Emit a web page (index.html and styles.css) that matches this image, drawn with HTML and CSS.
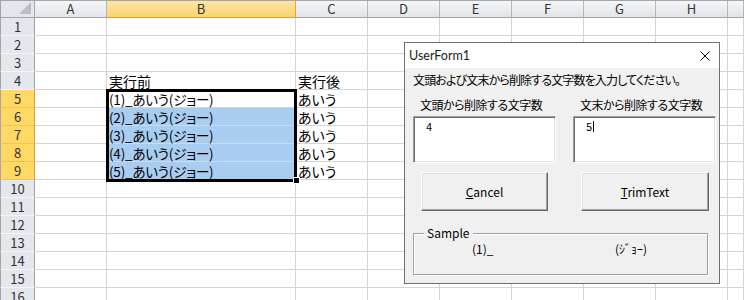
FILE: index.html
```html
<!DOCTYPE html>
<html lang="ja">
<head>
    <meta charset="UTF-8">
    <title>TrimText</title>
    <link rel="stylesheet" href="styles.css">
</head>
<body>
    <div class="sheet">
        <div class="row">
            <div class="corner"><svg width="12" height="12" viewBox="0 0 12 12"><polygon points="12,0 12,12 0,12" fill="#b9bec5"/></svg></div>
            <div class="col-head">A</div>
            <div class="col-head sel">B</div>
            <div class="col-head">C</div>
            <div class="col-head">D</div>
            <div class="col-head">E</div>
            <div class="col-head">F</div>
            <div class="col-head">G</div>
            <div class="col-head">H</div>
            <div class="col-head"></div>
        </div>
        <div class="row">
            <div class="row-head">1</div>
            <div class="cell"></div><div class="cell"></div><div class="cell"></div><div class="cell"></div><div class="cell"></div><div class="cell"></div><div class="cell"></div><div class="cell"></div><div class="cell"></div>
        </div>
        <div class="row">
            <div class="row-head">2</div>
            <div class="cell"></div><div class="cell"></div><div class="cell"></div><div class="cell"></div><div class="cell"></div><div class="cell"></div><div class="cell"></div><div class="cell"></div><div class="cell"></div>
        </div>
        <div class="row">
            <div class="row-head">3</div>
            <div class="cell"></div><div class="cell"></div><div class="cell"></div><div class="cell"></div><div class="cell"></div><div class="cell"></div><div class="cell"></div><div class="cell"></div><div class="cell"></div>
        </div>
        <div class="row">
            <div class="row-head">4</div>
            <div class="cell"></div><div class="cell">実行前</div><div class="cell">実行後</div><div class="cell"></div><div class="cell"></div><div class="cell"></div><div class="cell"></div><div class="cell"></div><div class="cell"></div>
        </div>
        <div class="row">
            <div class="row-head sel">5</div>
            <div class="cell"></div><div class="cell src">(1)_あいう(ジョー)</div><div class="cell">あいう</div><div class="cell"></div><div class="cell"></div><div class="cell"></div><div class="cell"></div><div class="cell"></div><div class="cell"></div>
        </div>
        <div class="row">
            <div class="row-head sel">6</div>
            <div class="cell"></div><div class="cell src hl">(2)_あいう(ジョー)</div><div class="cell">あいう</div><div class="cell"></div><div class="cell"></div><div class="cell"></div><div class="cell"></div><div class="cell"></div><div class="cell"></div>
        </div>
        <div class="row">
            <div class="row-head sel">7</div>
            <div class="cell"></div><div class="cell src hl">(3)_あいう(ジョー)</div><div class="cell">あいう</div><div class="cell"></div><div class="cell"></div><div class="cell"></div><div class="cell"></div><div class="cell"></div><div class="cell"></div>
        </div>
        <div class="row">
            <div class="row-head sel">8</div>
            <div class="cell"></div><div class="cell src hl">(4)_あいう(ジョー)</div><div class="cell">あいう</div><div class="cell"></div><div class="cell"></div><div class="cell"></div><div class="cell"></div><div class="cell"></div><div class="cell"></div>
        </div>
        <div class="row">
            <div class="row-head sel">9</div>
            <div class="cell"></div><div class="cell src hl">(5)_あいう(ジョー)</div><div class="cell">あいう</div><div class="cell"></div><div class="cell"></div><div class="cell"></div><div class="cell"></div><div class="cell"></div><div class="cell"></div>
        </div>
        <div class="row">
            <div class="row-head">10</div>
            <div class="cell"></div><div class="cell"></div><div class="cell"></div><div class="cell"></div><div class="cell"></div><div class="cell"></div><div class="cell"></div><div class="cell"></div><div class="cell"></div>
        </div>
        <div class="row">
            <div class="row-head">11</div>
            <div class="cell"></div><div class="cell"></div><div class="cell"></div><div class="cell"></div><div class="cell"></div><div class="cell"></div><div class="cell"></div><div class="cell"></div><div class="cell"></div>
        </div>
        <div class="row">
            <div class="row-head">12</div>
            <div class="cell"></div><div class="cell"></div><div class="cell"></div><div class="cell"></div><div class="cell"></div><div class="cell"></div><div class="cell"></div><div class="cell"></div><div class="cell"></div>
        </div>
        <div class="row">
            <div class="row-head">13</div>
            <div class="cell"></div><div class="cell"></div><div class="cell"></div><div class="cell"></div><div class="cell"></div><div class="cell"></div><div class="cell"></div><div class="cell"></div><div class="cell"></div>
        </div>
        <div class="row">
            <div class="row-head">14</div>
            <div class="cell"></div><div class="cell"></div><div class="cell"></div><div class="cell"></div><div class="cell"></div><div class="cell"></div><div class="cell"></div><div class="cell"></div><div class="cell"></div>
        </div>
        <div class="row">
            <div class="row-head">15</div>
            <div class="cell"></div><div class="cell"></div><div class="cell"></div><div class="cell"></div><div class="cell"></div><div class="cell"></div><div class="cell"></div><div class="cell"></div><div class="cell"></div>
        </div>
        <div class="row">
            <div class="row-head">16</div>
            <div class="cell"></div><div class="cell"></div><div class="cell"></div><div class="cell"></div><div class="cell"></div><div class="cell"></div><div class="cell"></div><div class="cell"></div><div class="cell"></div>
        </div>

        <!-- selected range B5:B9 -->
        <div class="selection"></div>
        <div class="fill-handle"></div>
    </div>

    <div class="dialog">
        <div class="titlebar">
            <span class="title">UserForm1</span>
            <svg class="close" width="10" height="10" viewBox="0 0 10 10">
                <path d="M0.5 0.5 L9.5 9.5 M9.5 0.5 L0.5 9.5" stroke="#000" stroke-width="1" fill="none"/>
            </svg>
        </div>
        <div class="form-body">
            <p class="prompt">文頭および文末から削除する文字数を入力してください。</p>
            <div class="fields">
                <div class="field">
                    <label>文頭から削除する文字数</label>
                    <div class="textbox">4</div>
                </div>
                <div class="field">
                    <label>文末から削除する文字数</label>
                    <div class="textbox">5<span class="caret"></span></div>
                </div>
            </div>
            <div class="buttons">
                <button class="btn cancel"><u>C</u>ancel</button>
                <button class="btn trim"><u>T</u>rimText</button>
            </div>
            <fieldset class="sample">
                <legend>Sample</legend>
                <div class="sample-cols">
                    <span>(1)_</span>
                    <span>(ｼﾞｮｰ)</span>
                </div>
            </fieldset>
        </div>
    </div>
</body>
</html>
```

FILE: styles.css
```css
* {
    box-sizing: border-box;
}

body {
    margin: 0;
    width: 744px;
    height: 300px;
    overflow: hidden;
    position: relative;
    background: #fff;
    font-family: "Noto Sans CJK JP", sans-serif;
}

/* spreadsheet */
.sheet {
    position: relative;
    display: grid;
    grid-template-columns: 35px 72px 189px repeat(6, 72px) 16px;
    grid-auto-rows: 18px;
}

.row {
    display: contents;
}

.corner {
    display: flex;
    align-items: flex-end;
    justify-content: flex-end;
    padding: 0 3px 3px 0;
    background: #e4e7eb;
    border: 1px solid #a3a7ad;
}

.col-head {
    background: linear-gradient(#f5f6f8, #e2e5e9);
    border-top: 1px solid #a3a7ad;
    border-right: 1px solid #b4b8be;
    border-bottom: 1px solid #9ea3aa;
    text-align: center;
    font-size: 13px;
    line-height: 16px;
    color: #333;
}

.col-head.sel {
    background: linear-gradient(#fbe7a6, #f8d470);
    border-right-color: #e4a13e;
    border-bottom-color: #e59a34;
}

.row-head {
    background: #e4e7eb;
    border-left: 1px solid #a3a7ad;
    border-right: 1px solid #9ea3aa;
    border-bottom: 1px solid #f4f5f7;
    text-align: center;
    font-size: 13px;
    line-height: 17px;
    color: #333;
}

.row-head.sel {
    background: #ffd964;
    border-right-color: #e29b35;
    border-bottom-color: #f1c25a;
}

.cell {
    border-right: 1px solid #d4d4d4;
    border-bottom: 1px solid #d4d4d4;
    padding: 1px 0 0 2px;
    font-size: 14px;
    line-height: 16px;
    white-space: nowrap;
    color: #000;
    font-feature-settings: "palt";
}

.cell.src {
    font-size: 13.5px;
    letter-spacing: -0.2px;
}

.cell.hl {
    background: #a8cdf1;
    border-bottom-color: #c8dcf2;
}

.selection {
    position: absolute;
    left: 106px;
    top: 89px;
    width: 191px;
    height: 93px;
    border: 3px solid #000;
}

.fill-handle {
    position: absolute;
    left: 293px;
    top: 177px;
    width: 7px;
    height: 7px;
    background: #000;
    border: 1px solid #fff;
}

/* user form */
.dialog {
    position: absolute;
    left: 404px;
    top: 42px;
    width: 316px;
    height: 242px;
    border: 1px solid #6f6f6f;
    background: #f0f0f0;
    font-size: 12px;
    color: #000;
}

.titlebar {
    height: 25px;
    background: #fff;
    display: flex;
    align-items: center;
    justify-content: space-between;
    padding: 0 9px 0 4px;
}

.title {
    font-family: Lato, "Noto Sans", sans-serif;
    font-size: 12.5px;
    color: #1b1b1b;
}

.form-body {
    padding-top: 5px;
    font-feature-settings: "palt";
}

.prompt {
    margin: 0 0 0 8px;
    line-height: 14px;
    letter-spacing: -0.85px;
}

.fields {
    display: grid;
    grid-template-columns: 143px 143px;
    gap: 17px;
    padding-left: 8px;
    margin-top: 11px;
}

.field label {
    display: block;
    padding-left: 7px;
    line-height: 14px;
    margin-bottom: 4px;
    letter-spacing: -0.5px;
}

.textbox {
    height: 47px;
    background: #fff;
    border: 1px solid;
    border-color: #a0a0a0 #fff #fff #a0a0a0;
    box-shadow: inset 1px 1px #696969, inset -1px -1px #e3e3e3;
    padding: 3px 0 0 12px;
    font-size: 11px;
    line-height: 13px;
}

.caret {
    display: inline-block;
    width: 1px;
    height: 11px;
    margin-left: 1px;
    vertical-align: -1px;
    background: #000;
}

.buttons {
    display: flex;
    gap: 33px;
    margin: 9px 0 0 16px;
}

.btn {
    height: 39px;
    padding: 0;
    background: #f0f0f0;
    border: 1px solid;
    border-color: #fff #696969 #696969 #fff;
    box-shadow: inset -1px -1px #a0a0a0, inset 1px 1px #e3e3e3;
    font-family: "Noto Sans CJK JP", sans-serif;
    font-size: 12px;
    color: #000;
}

.btn.cancel {
    width: 127px;
}

.btn.trim {
    width: 128px;
}

.sample {
    margin: 15px 0 0 8px;
    width: 295px;
    height: 49px;
    padding: 0;
    border: 1px solid #a0a0a0;
    box-shadow: 1px 1px #fff, inset 1px 1px #fff;
}

.sample legend {
    margin-left: 10px;
    padding: 0 3px;
    line-height: 14px;
}

.sample-cols {
    display: grid;
    grid-template-columns: 143px auto;
    padding: 2px 0 0 58px;
    line-height: 14px;
}
```
